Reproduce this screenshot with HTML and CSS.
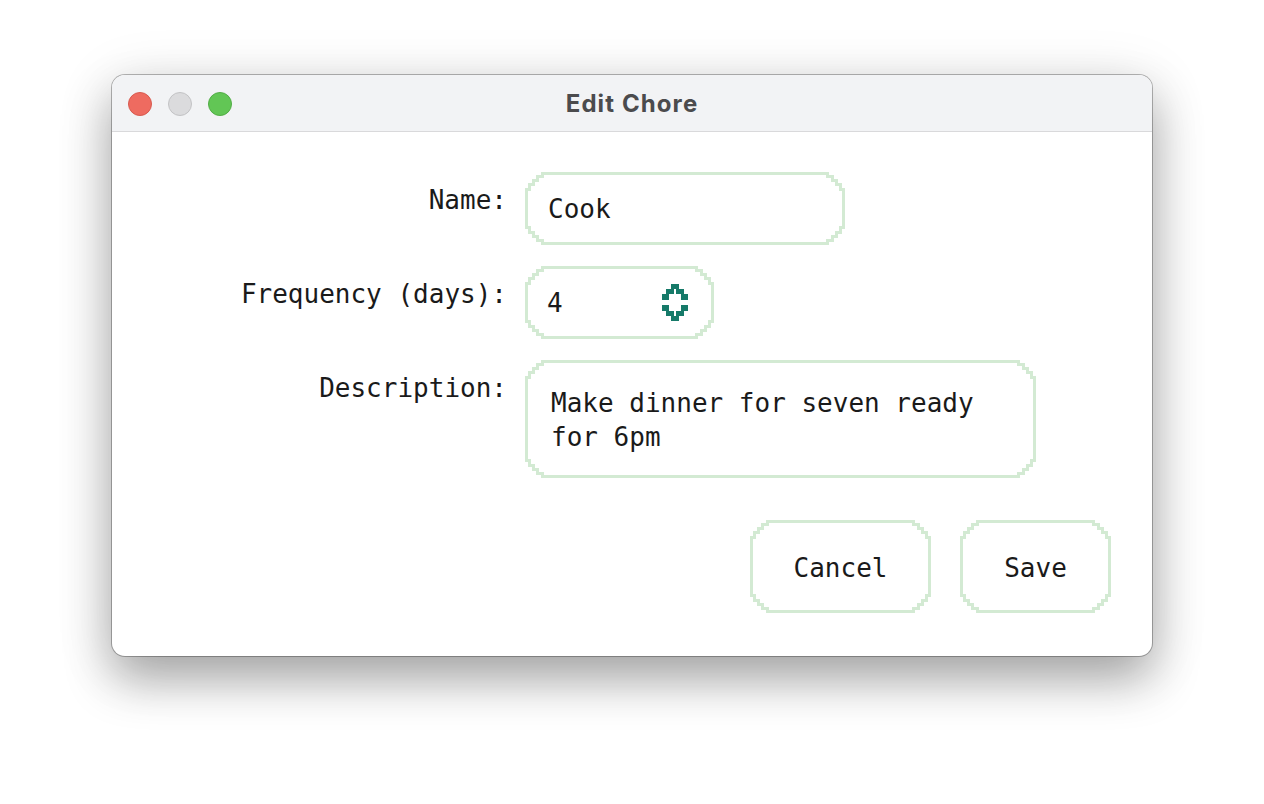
FILE: index.html
```html
<!DOCTYPE html>
<html lang="en">
<head>
<meta charset="utf-8">
<title>Edit Chore</title>
<link rel="stylesheet" href="styles.css">
</head>
<body>
<div class="stage">
  <div class="window">
    <div class="titlebar">
      <div class="lights">
        <span class="light light-close"></span>
        <span class="light light-min"></span>
        <span class="light light-max"></span>
      </div>
      <div class="title">Edit Chore</div>
      <div></div>
    </div>
    <div class="content">
      <div class="form">
        <div class="label">Name:</div>
        <div class="frame frame-name">
          <div class="fill field">Cook</div>
        </div>

        <div class="label">Frequency (days):</div>
        <div class="frame frame-freq">
          <div class="fill field field-spin">
            <span>4</span>
            <svg class="spin" width="26" height="37" viewBox="0 0 26 37" shape-rendering="crispEdges">
              <rect x="9" y="0" width="8" height="5"/>
              <rect x="4" y="5" width="8" height="5"/>
              <rect x="14" y="5" width="8" height="5"/>
              <rect x="0" y="10" width="7" height="6"/>
              <rect x="19" y="10" width="7" height="6"/>
              <rect x="0" y="21" width="7" height="6"/>
              <rect x="19" y="21" width="7" height="6"/>
              <rect x="4" y="27" width="8" height="5"/>
              <rect x="14" y="27" width="8" height="5"/>
              <rect x="9" y="32" width="8" height="5"/>
            </svg>
          </div>
        </div>

        <div class="label">Description:</div>
        <div class="frame frame-desc">
          <div class="fill area">Make dinner for seven ready for 6pm</div>
        </div>
      </div>
      <div class="actions">
        <div class="frame frame-cancel">
          <div class="fill button">Cancel</div>
        </div>
        <div class="frame frame-save">
          <div class="fill button">Save</div>
        </div>
      </div>
    </div>
  </div>
</div>
</body>
</html>
```

FILE: styles.css
```css
* { box-sizing: border-box; }

html, body {
  margin: 0;
  padding: 0;
  background: #ffffff;
}

.stage {
  min-height: 804px;
  padding: 75px 112px 0 112px;
  overflow: visible;
}

.window {
  width: 1040px;
  height: 581px;
  background: #ffffff;
  border-radius: 13px;
  overflow: hidden;
  box-shadow:
    0 0 0 1px rgba(0, 0, 0, 0.28),
    0 24px 48px rgba(0, 0, 0, 0.30),
    0 8px 60px rgba(0, 0, 0, 0.12);
}

.titlebar {
  height: 57px;
  background: #f2f3f5;
  border-bottom: 1px solid #d9d9db;
  display: grid;
  grid-template-columns: 1fr auto 1fr;
  align-items: center;
}

.lights {
  display: flex;
  gap: 16px;
  padding-left: 16px;
  padding-top: 1px;
}

.light {
  width: 24px;
  height: 24px;
  border-radius: 50%;
  display: block;
}

.light-close { background: #ee6b60; border: 1px solid #d85a4f; }
.light-min { background: #dbdbdd; border: 1px solid #c3c3c5; }
.light-max { background: #62c655; border: 1px solid #52ad46; }

.title {
  font-family: "Inter", "Liberation Sans", sans-serif;
  font-weight: 700;
  font-size: 24px;
  color: #4b4b4d;
  letter-spacing: 1.1px;
}

.content {
  font-family: "DejaVu Sans Mono", "Liberation Mono", monospace;
  font-size: 26px;
  line-height: 34px;
  color: #1a1a1a;
}

.form {
  display: grid;
  grid-template-columns: 395px auto;
  column-gap: 18px;
  row-gap: 21px;
  padding-top: 40px;
  justify-items: start;
}

.label {
  justify-self: end;
  padding-top: 11px;
  white-space: pre;
}

.frame {
  --stairs: polygon(
    16px 0, calc(100% - 16px) 0,
    calc(100% - 16px) 3px, calc(100% - 11px) 3px, calc(100% - 11px) 7px, calc(100% - 7px) 7px,
    calc(100% - 7px) 11px, calc(100% - 3px) 11px, calc(100% - 3px) 16px, 100% 16px,
    100% calc(100% - 16px), calc(100% - 3px) calc(100% - 16px), calc(100% - 3px) calc(100% - 11px),
    calc(100% - 7px) calc(100% - 11px), calc(100% - 7px) calc(100% - 7px), calc(100% - 11px) calc(100% - 7px),
    calc(100% - 11px) calc(100% - 3px), calc(100% - 16px) calc(100% - 3px), calc(100% - 16px) 100%,
    16px 100%, 16px calc(100% - 3px), 11px calc(100% - 3px), 11px calc(100% - 7px),
    7px calc(100% - 7px), 7px calc(100% - 11px), 3px calc(100% - 11px), 3px calc(100% - 16px),
    0 calc(100% - 16px),
    0 16px, 3px 16px, 3px 11px, 7px 11px, 7px 7px, 11px 7px, 11px 3px, 16px 3px
  );
  display: flex;
  padding: 3px;
  background: #d3ead3;
  clip-path: var(--stairs);
}

.fill {
  flex: 1;
  background: #ffffff;
  clip-path: var(--stairs);
}

.frame-name { width: 320px; height: 73px; }
.frame-freq { width: 189px; height: 73px; }
.frame-desc { width: 511px; height: 118px; }
.frame-cancel { width: 181px; height: 93px; }
.frame-save { width: 151px; height: 93px; }

.field {
  padding: 17px 18px 16px 20px;
  white-space: nowrap;
}

.field-spin {
  display: flex;
  align-items: center;
  justify-content: space-between;
  padding-right: 23px;
  padding-left: 19px;
  padding-top: 0;
  padding-bottom: 0;
}

.spin {
  display: block;
  fill: #167a69;
  margin-top: -1px;
}

.area {
  padding: 23px 22px 21px 23px;
}

.actions {
  display: flex;
  justify-content: flex-end;
  gap: 29px;
  padding-right: 41px;
  margin-top: 42px;
}

.button {
  display: flex;
  align-items: center;
  justify-content: center;
  padding-top: 2px;
}
```
